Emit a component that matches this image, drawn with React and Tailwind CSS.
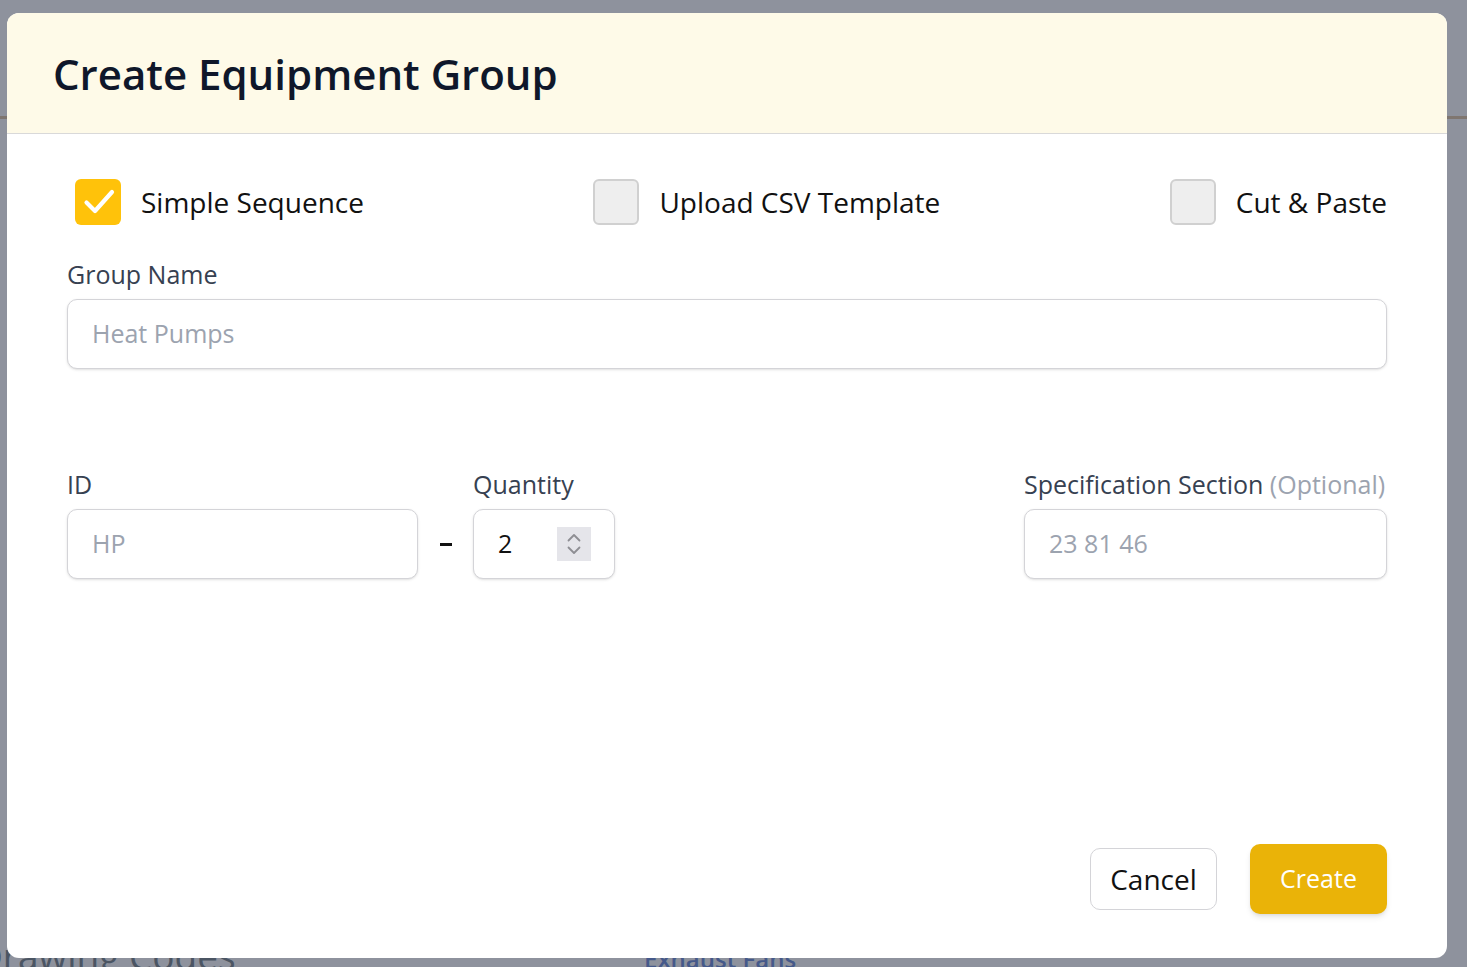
import { useState } from "react";

function Check({ checked, label, onToggle }) {
  return (
    <label className="flex cursor-pointer items-center gap-5" onClick={onToggle}>
      {checked ? (
        <span className="flex h-[46px] w-[46px] items-center justify-center rounded-[6px] bg-[#ffc20a]">
          <svg width="46" height="46" viewBox="0 0 46 46" fill="none">
            <path d="M11.5 23.5l8.5 8.5 17-19" stroke="#fff" strokeWidth="4.2" strokeLinecap="round" strokeLinejoin="round" />
          </svg>
        </span>
      ) : (
        <span className="h-[46px] w-[46px] rounded-[6px] border-2 border-[#d0d0d0] bg-[#eeeeee]" />
      )}
      <span className="text-[28px] text-[#111]">{label}</span>
    </label>
  );
}

function Field({ label, optional, placeholder, className }) {
  return (
    <div className={className}>
      <p className="text-[25px] leading-[30px] text-[#374151]">
        {label}
        {optional && <span className="text-[#9ca3af]"> (Optional)</span>}
      </p>
      <div className="mt-[10px] flex h-[70px] items-center rounded-[10px] border border-[#d4d4d8] bg-white px-6 shadow-sm">
        <span className="text-[25px] text-[#9ca3af]">{placeholder}</span>
      </div>
    </div>
  );
}

export default function App() {
  const [mode, setMode] = useState("simple");

  return (
    <div className="relative h-[967px] w-full overflow-hidden bg-[#8e929d] font-['Open_Sans','Noto_Sans',sans-serif]">
      {/* page behind the overlay */}
      <div className="flex h-full flex-col">
        <div className="mt-[116px] h-[3px] bg-[#7f7670]" />
        <div className="flex-1" />
        <div className="flex items-end">
          <span className="-ml-[24px] mb-[-16px] w-[668px] text-[37px] text-[#4b5563]">Drawing Codes</span>
          <span className="mb-[-10px] text-[24px] font-semibold text-[#45598a]">Exhaust Fans</span>
        </div>
      </div>

      {/* modal */}
      <div className="absolute left-[7px] top-[13px] flex h-[945px] w-[1440px] flex-col overflow-hidden rounded-[12px] bg-white">
        <div className="flex h-[121px] shrink-0 items-center border-b border-[#d9d9d9] bg-[#fefae8] pl-[46px]">
          <h1 className="text-[42px] font-semibold text-[#0f172a]">Create Equipment Group</h1>
        </div>

        <div className="flex flex-1 flex-col px-[60px] pb-[44px] pt-[45px]">
          <div className="flex items-center justify-between pl-2">
            <Check checked={mode === "simple"} label="Simple Sequence" onToggle={() => setMode("simple")} />
            <Check checked={mode === "csv"} label="Upload CSV Template" onToggle={() => setMode("csv")} />
            <Check checked={mode === "paste"} label="Cut & Paste" onToggle={() => setMode("paste")} />
          </div>

          <Field label="Group Name" placeholder="Heat Pumps" className="mt-[34px]" />

          <div className="mt-[100px] flex items-start justify-between">
            <div className="flex items-end">
              <Field label="ID" placeholder="HP" className="w-[351px]" />
              <div className="flex h-[70px] w-[55px] items-center justify-center">
                <span className="h-[3px] w-[12px] bg-[#111]" />
              </div>
              <div className="w-[142px]">
                <p className="text-[25px] leading-[30px] text-[#374151]">Quantity</p>
                <div className="mt-[10px] flex h-[70px] items-center justify-between rounded-[10px] border border-[#d4d4d8] bg-white pl-6 pr-[23px] shadow-sm">
                  <span className="text-[25px] text-[#111]">2</span>
                  <span className="flex h-[34px] w-[34px] flex-col items-center justify-center bg-[#e5e5ea]">
                    <svg width="16" height="26" viewBox="0 0 16 26" fill="none">
                      <path d="M2.5 9.5L8 4l5.5 5.5M2.5 16.5L8 22l5.5-5.5" stroke="#8e8e93" strokeWidth="1.8" strokeLinecap="round" strokeLinejoin="round" />
                    </svg>
                  </span>
                </div>
              </div>
            </div>
            <Field label="Specification Section" optional placeholder="23 81 46" className="w-[363px]" />
          </div>

          <div className="flex-1" />

          <div className="flex items-center justify-end gap-[33px]">
            <button type="button" className="h-[62px] w-[127px] rounded-[10px] border border-[#d4d4d8] bg-white text-[28px] text-[#111]">
              Cancel
            </button>
            <button type="button" className="h-[70px] w-[137px] rounded-[10px] bg-[#eab308] text-[25px] text-white shadow-md">
              Create
            </button>
          </div>
        </div>
      </div>
    </div>
  );
}
